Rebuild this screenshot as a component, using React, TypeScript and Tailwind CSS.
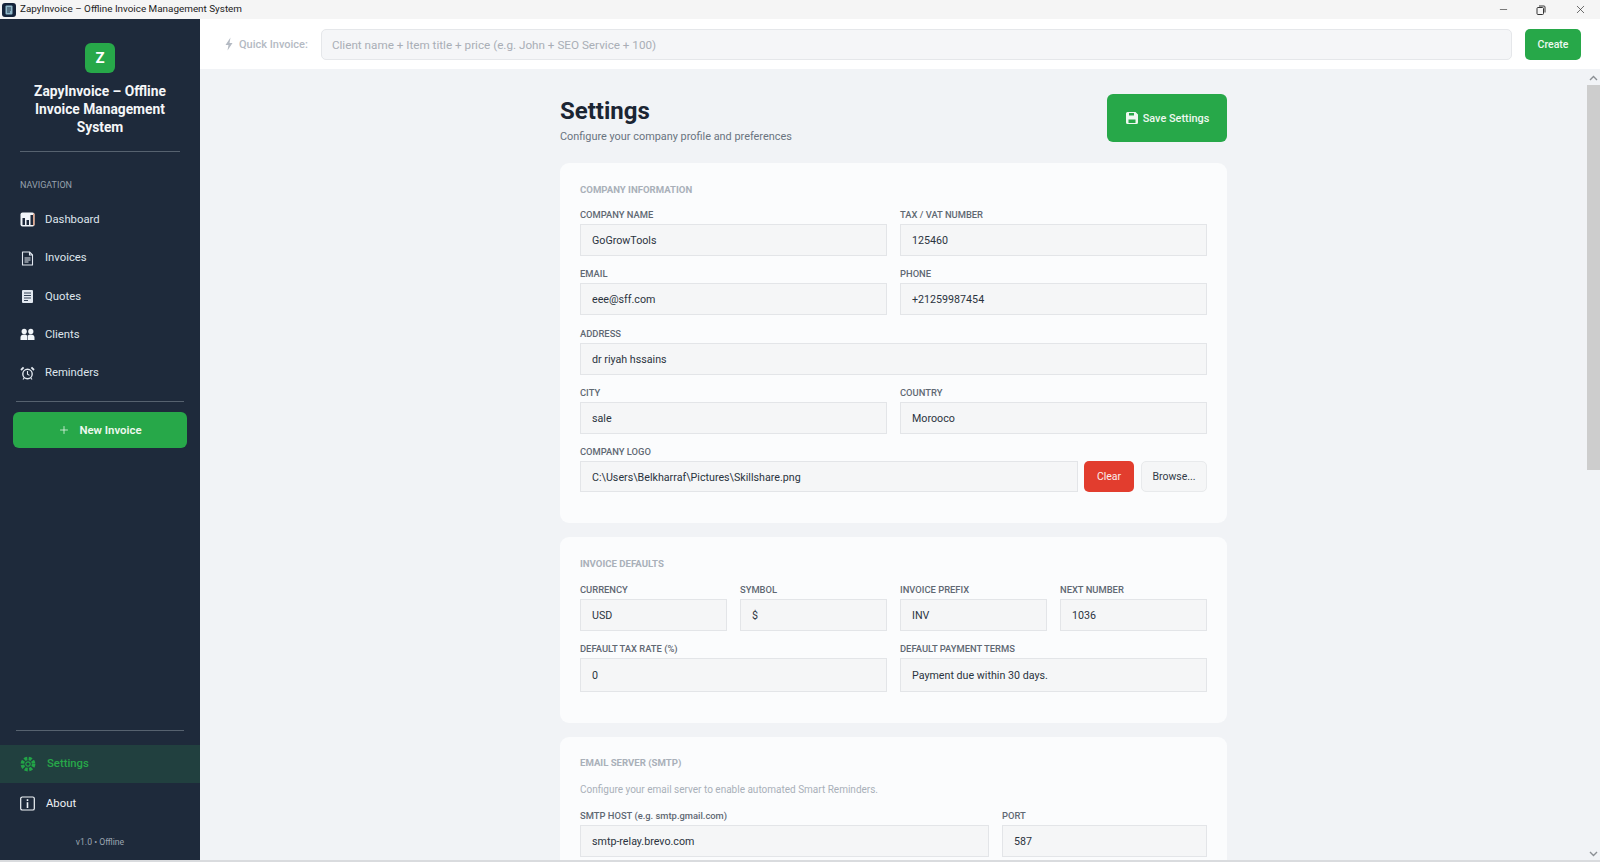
import type { ReactNode } from 'react';
import { Minus, Plus, X } from 'lucide-react';

function DashboardIcon() {
  return (
    <svg width="15" height="15" viewBox="0 0 15 15">
      <rect x="0.5" y="0.5" width="14" height="14" rx="2" fill="#f1f5f9" />
      <rect x="2.5" y="6" width="2.5" height="7" fill="#1e293b" />
      <rect x="6.5" y="8" width="2.5" height="5" fill="#1e293b" />
      <rect x="10.5" y="3" width="2.5" height="10" fill="#1e293b" />
      <rect x="13" y="1.5" width="1.5" height="12" fill="#e0a58a" />
    </svg>
  );
}

function InvoiceIcon() {
  return (
    <svg width="15" height="15" viewBox="0 0 15 15" fill="none" stroke="#e2e8f0" strokeWidth="1.1">
      <path d="M2.5 1h7l3 3v10h-10z" strokeLinejoin="round" />
      <path d="M9.5 1v3h3M4.5 7h6M4.5 9h6M4.5 11h4" />
    </svg>
  );
}

function QuoteIcon() {
  return (
    <svg width="15" height="15" viewBox="0 0 15 15">
      <rect x="2" y="1" width="11" height="13" rx="1" fill="#e2e8f0" />
      <path d="M4 4h7M4 6.5h7M4 9h7M4 11.5h4" stroke="#334155" strokeWidth="1.1" />
    </svg>
  );
}

function ClientsIcon() {
  return (
    <svg width="15" height="15" viewBox="0 0 15 15" fill="#f1f5f9">
      <circle cx="4.2" cy="4.4" r="2.6" />
      <circle cx="10.8" cy="4.4" r="2.6" />
      <path d="M0.5 13v-2.6c0-1.9 1.4-3 3.7-3 1.3 0 2.4.4 3 1.1v4.5zM7.8 13V8.5c.6-.7 1.7-1.1 3-1.1 2.3 0 3.7 1.1 3.7 3V13z" />
    </svg>
  );
}

function ReminderIcon() {
  return (
    <svg width="15" height="15" viewBox="0 0 15 15" fill="none" stroke="#e2e8f0" strokeWidth="1.4">
      <circle cx="7.5" cy="8" r="4.7" />
      <path d="M7.5 5v3.2l2 1.2M3 13.5l1.2-1.6M12 13.5l-1.2-1.6" strokeWidth="1.1" />
      <path d="M1 4l2.6-2.6M14 4l-2.6-2.6" strokeWidth="1.8" />
    </svg>
  );
}

function GearIcon() {
  return (
    <svg width="16" height="16" viewBox="0 0 16 16" fill="none">
      <circle cx="8" cy="8" r="5.6" stroke="#22a347" strokeWidth="3.6" strokeDasharray="3 1.4" />
      <circle cx="8" cy="8" r="2.2" stroke="#22a347" strokeWidth="1.2" />
    </svg>
  );
}

function AboutIcon() {
  return (
    <svg width="15" height="15" viewBox="0 0 15 15" fill="none" stroke="#f1f5f9">
      <rect x="0.7" y="1" width="13.6" height="13" rx="1.6" strokeWidth="1.2" />
      <path d="M7.5 6.2V12" strokeWidth="1.6" />
      <path d="M7.5 3.2V5" strokeWidth="1.6" />
    </svg>
  );
}

function NavItem({ icon, label }: { icon: ReactNode; label: string }) {
  return (
    <div className="flex h-[38.4px] items-center pl-[20px]">
      <span className="flex w-[25px] shrink-0">{icon}</span>
      <span className="pt-[1px] text-[11.3px] text-[#dfe5ec]">{label}</span>
    </div>
  );
}

function Field({ label, value, className, tall, plain }: { label: string; value: string; className?: string; tall?: boolean; plain?: boolean }) {
  return (
    <div className={className}>
      <div className={`mb-[2px] h-[14px] text-[9.4px] leading-[14px] font-medium text-[#5f6873] ${plain ? '' : 'uppercase'}`}>{label}</div>
      <input
        readOnly
        value={value}
        className={`w-full border border-[#e3e5e8] bg-[#f5f6f7] px-[11px] pt-[1px] text-[10.7px] text-[#2b3440] outline-none ${tall ? 'h-[34px]' : 'h-[32px]'}`}
      />
    </div>
  );
}

function Card({ title, children, top, gap }: { title: string; children: ReactNode; top?: string; gap?: string }) {
  return (
    <section className={`rounded-[9px] bg-[#fbfcfd] px-[20px] pb-[31px] ${top ?? 'pt-[19px]'}`}>
      <h2 className={`h-[14px] text-[9.6px] leading-[14px] font-bold text-[#a9b0b9] uppercase ${gap ?? 'mb-[12px]'}`}>{title}</h2>
      {children}
    </section>
  );
}

export default function App() {
  return (
    <div className="flex h-[862px] w-[1600px] flex-col overflow-hidden bg-[#f1f3f6] font-['Roboto',sans-serif]">
      {/* Title bar */}
      <div className="flex h-[19px] shrink-0 items-center bg-[#f5f5f5] pl-[2px]">
        <svg width="14" height="14" viewBox="0 0 14 14" className="mr-[4px]">
          <rect width="14" height="14" rx="3" fill="#14233a" />
          <rect x="3.5" y="2.5" width="7" height="9" rx="1" fill="#8fb8c9" />
          <path d="M5 5h4M5 7h4M5 9h3" stroke="#14233a" strokeWidth="0.9" />
        </svg>
        <span className="text-[9.9px] text-[#222]">ZapyInvoice – Offline Invoice Management System</span>
        <div className="ml-auto flex items-center">
          <Minus size={11} strokeWidth={1.4} className="mr-[27px] text-[#333]" />
          <svg width="10" height="10" viewBox="0 0 10 10" fill="none" stroke="#333" className="mr-[28px]">
            <rect x="1" y="2.5" width="6.5" height="7" rx="1" />
            <path d="M3 1h5a1 1 0 0 1 1 1v5.5" />
          </svg>
          <X size={13} strokeWidth={1.3} className="mr-[13px] text-[#333]" />
        </div>
      </div>

      <div className="flex min-h-0 flex-1">
        {/* Sidebar */}
        <aside className="flex w-[200px] shrink-0 flex-col bg-[#1e2a3b]">
          <div className="mx-auto mt-[24px] flex h-[30px] w-[30px] items-center justify-center rounded-[6px] bg-[#27a849] text-[15px] font-bold text-white">
            Z
          </div>
          <div className="mt-[9px] px-[20px] text-center text-[13.8px] leading-[18px] font-bold text-[#f4f6f8]">
            ZapyInvoice – Offline Invoice Management System
          </div>
          <div className="mx-[20px] mt-[15px] h-px bg-[#56626f]" />
          <div className="mt-[27px] mb-[9.5px] h-[12px] pl-[20px] text-[9px] leading-[12px] text-[#97a1ad]">NAVIGATION</div>
          <NavItem icon={<DashboardIcon />} label="Dashboard" />
          <NavItem icon={<InvoiceIcon />} label="Invoices" />
          <NavItem icon={<QuoteIcon />} label="Quotes" />
          <NavItem icon={<ClientsIcon />} label="Clients" />
          <NavItem icon={<ReminderIcon />} label="Reminders" />
          <div className="mx-[16px] mt-[8.5px] h-px bg-[#56626f]" />
          <button className="mx-[13px] mt-[10px] flex h-[36px] items-center justify-center gap-[9px] rounded-[6px] bg-[#27a849] text-[11.4px] font-semibold text-[#eef8f0]">
            <Plus size={12} strokeWidth={1.5} />
            <span className="pt-[1px]">New Invoice</span>
          </button>
          <div className="mx-[16px] mt-auto h-px bg-[#56626f]" />
          <div className="mt-[14px] flex h-[38px] items-center bg-[#21403f] pl-[20px]">
            <span className="flex w-[27px] shrink-0">
              <GearIcon />
            </span>
            <span className="text-[11.3px] font-medium text-[#27a849]">Settings</span>
          </div>
          <div className="flex h-[41px] items-center pl-[20px]">
            <span className="flex w-[26px] shrink-0">
              <AboutIcon />
            </span>
            <span className="pt-[2px] text-[11.3px] text-[#eef1f5]">About</span>
          </div>
          <div className="mt-[11px] mb-[11px] h-[14px] text-center text-[8.7px] leading-[14px] text-[#9aa4b0]">v1.0 • Offline</div>
        </aside>

        <div className="flex min-w-0 flex-1 flex-col">
          {/* Quick invoice bar */}
          <div className="flex h-[50px] shrink-0 items-center bg-white pr-[19px] pl-[24px]">
            <svg width="10" height="14" viewBox="0 0 10 14" fill="#b4bac3" className="mr-[5px]">
              <path d="M6.5 0.5L1.5 8h3l-1 5.5L8.5 6h-3z" />
            </svg>
            <span className="mr-[13px] pt-[2px] text-[11px] font-medium text-[#b4bac3]">Quick Invoice:</span>
            <input
              readOnly
              placeholder="Client name + Item title + price (e.g. John + SEO Service + 100)"
              className="h-[31px] min-w-0 flex-1 rounded-[5px] border border-[#e5e7ea] bg-[#f5f6f8] px-[10px] pt-[1px] text-[11.7px] outline-none placeholder:text-[#a9aeb6]"
            />
            <button className="ml-[13px] h-[31px] w-[56px] rounded-[5px] bg-[#27a849] pt-[1px] text-[10.5px] font-medium text-[#eef8f0]">Create</button>
          </div>

          <div className="flex min-h-0 flex-1">
            {/* Scrolling page */}
            <main className="min-w-0 flex-1 overflow-hidden">
              <div className="mx-auto w-[667px]">
                <div className="flex h-[94px] items-start justify-between pt-[25px]">
                  <div>
                    <h1 className="h-[32px] pt-[1px] text-[24px] leading-[32px] font-bold text-[#1b2533]">Settings</h1>
                    <p className="mt-[2px] text-[10.9px] leading-[18px] text-[#6a7480]">Configure your company profile and preferences</p>
                  </div>
                  <button className="flex h-[48px] w-[120px] items-center justify-center gap-[4px] rounded-[6px] bg-[#27a849] text-[10.9px] font-medium text-[#eef8f0]">
                    <svg width="14" height="14" viewBox="0 0 14 14" fill="#eef8f0">
                      <path d="M1 2.5A1.5 1.5 0 0 1 2.5 1h8L13 3.5v8a1.5 1.5 0 0 1-1.5 1.5h-9A1.5 1.5 0 0 1 1 11.5z" />
                      <rect x="4" y="2" width="5" height="2.5" fill="#27a849" />
                      <rect x="3.5" y="8.5" width="7" height="3.5" fill="#27a849" />
                    </svg>
                    <span className="pt-[2px]">Save Settings</span>
                  </button>
                </div>

                <div className="flex flex-col gap-[14px]">
                  <Card title="Company Information" top="pt-[20px]" gap="mb-[11px]">
                    <div className="grid grid-cols-2 gap-x-[13px] gap-y-[11.25px]">
                      <Field label="Company Name" value="GoGrowTools" />
                      <Field label="Tax / VAT Number" value="125460" />
                      <Field label="Email" value="eee@sff.com" />
                      <Field label="Phone" value="+21259987454" />
                      <Field label="Address" value="dr riyah hssains" className="col-span-2" />
                      <Field label="City" value="sale" />
                      <Field label="Country" value="Morooco" />
                      <div className="col-span-2">
                        <div className="mb-[2px] h-[14px] text-[9.4px] leading-[14px] font-medium text-[#5f6873] uppercase">Company Logo</div>
                        <div className="flex">
                          <input
                            readOnly
                            value="C:\Users\Belkharraf\Pictures\Skillshare.png"
                            className="h-[31px] min-w-0 flex-1 border border-[#e3e5e8] bg-[#f5f6f7] px-[11px] pt-[1px] text-[10.7px] text-[#2b3440] outline-none"
                          />
                          <button className="ml-[6px] h-[31px] w-[50px] rounded-[5px] bg-[#e23d2e] pt-[1px] text-[10.5px] text-[#fbeeec]">Clear</button>
                          <button className="ml-[7px] h-[31px] w-[66px] rounded-[5px] border border-[#e8eaec] bg-[#f5f6f7] pt-[1px] text-[10.5px] text-[#333c47]">Browse...</button>
                        </div>
                      </div>
                    </div>
                  </Card>

                  <Card title="Invoice Defaults" top="pt-[20px]">
                    <div className="grid grid-cols-4 gap-x-[13px] gap-y-[11px]">
                      <Field label="Currency" value="USD" />
                      <Field label="Symbol" value="$" />
                      <Field label="Invoice Prefix" value="INV" />
                      <Field label="Next Number" value="1036" />
                      <Field label="Default Tax Rate (%)" value="0" className="col-span-2" tall />
                      <Field label="Default Payment Terms" value="Payment due within 30 days." className="col-span-2" tall />
                    </div>
                  </Card>

                  <Card title="Email Server (SMTP)">
                    <p className="mt-[-1px] mb-[12px] h-[16px] pt-[1px] text-[10px] leading-[16px] text-[#a9b0b9]">
                      Configure your email server to enable automated Smart Reminders.
                    </p>
                    <div className="grid grid-cols-[409px_205px] gap-x-[13px]">
                      <Field label="SMTP HOST (e.g. smtp.gmail.com)" value="smtp-relay.brevo.com" plain />
                      <Field label="Port" value="587" />
                    </div>
                  </Card>
                </div>
              </div>
            </main>

            {/* Scrollbar */}
            <div className="flex w-[13px] shrink-0 flex-col items-center bg-[#f1f3f6]">
              <svg width="9" height="6" viewBox="0 0 9 6" fill="none" stroke="#8b8f94" strokeWidth="1.4" className="mt-[6px]">
                <path d="M1 5l3.5-3.5L8 5" />
              </svg>
              <div className="mt-[4px] h-[385px] w-full bg-[#cdcdcd]" />
              <svg width="9" height="6" viewBox="0 0 9 6" fill="none" stroke="#8b8f94" strokeWidth="1.4" className="mt-auto mb-[3px]">
                <path d="M1 1l3.5 3.5L8 1" />
              </svg>
            </div>
          </div>
        </div>
      </div>
      <div className="h-[2px] shrink-0 bg-[#d9dbde]" />
    </div>
  );
}
